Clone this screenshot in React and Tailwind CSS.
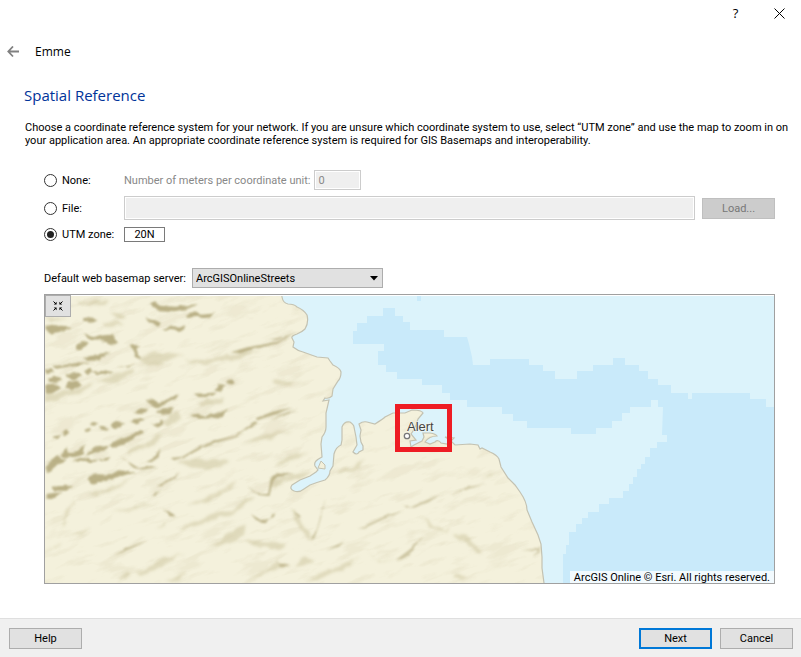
import React from "react";

const DEEP_WATER =
  "M353 344V331H357V323H367V316H383V308H395V316H403V322H410V330H444V337H467L469 344L472 357L473 365H490V359H529V365H543V371H555V379H577V371H593V365H613V358H625V365H639V371H648V379H658V385H671V393H688V399H692V393H750V399H766V407H1600V900H563V554H566V545H569V532H576V524H582V518H588V512H599V504H609V498H623V491H629V484H633V477H637V469H641V464H645V457H650V448H657V442H667V435H662L663 407H658V400H651V407H630V413H622V421H612V428H596V434H571V428H527V421H513V414H502V407H467V400H450V393H442V385H422V379H397V372H386V365H378V351H384V344Z";

const LAND =
  "M30 280H280L282 297Q283 303 288 304Q294 304 297 307Q304 310 307 315Q309 322 305 329Q302 332 297 334Q291 336 292 338L294 342L293 347Q298 351 303 352L317 357L328 358L330 361L333 365Q340 368 341 372Q341 378 338 381L333 389L332 396Q329 399 325 398L323 401L329 400L326 413V427Q326 432 322 437L321 444L322 457Q318 459 316 461Q314 463 315 466L318 470L316 472L310 476L300 480L292 485Q289 489 294 491Q299 493 304 489L310 485Q318 482 325 480Q330 476 330 471L333 466L334 454Q336 447 341 445L342 440V427Q344 421 350 422Q354 425 354 427L356 437L357 445L353 452Q357 456 359 452L363 450L363 446L361 442L360 436L361 430L359 424Q363 421 367 422L375 424Q383 419 385 417L393 413L405 413L412 410Q422 410 423 413L418 419L416 425L413 431L411 434L416 440L410 441L411 447L414 445L422 441L424 437L423 433L430 433Q436 434 437 436Q429 436 425 442L430 444L435 442Q438 439 441 443L447 444L450 440L445 437L454 438L451 441L455 445L470 444L478 445L480 449L482 448L490 452Q497 455 499 459L501 467L508 478L515 485L520 492Q527 502 527 510L532 522L538 535L541 544L542 557L542 568L544 583L544 620H30Z";

/* Shaded slopes, in map units of one third of a pixel */
const DARK_SLOPES = [
  "M315 28L335 22L350 35L395 38L460 30L435 43L390 52L335 48Z",
  "M425 62L450 52L475 62L512 58L492 75L460 68L430 72Z",
  "M305 72L330 80L352 90L342 98L315 85Z",
  "M350 105L385 97L425 98L415 112L375 108Z",
  "M5 96L25 92L55 98L85 101L50 113L20 119L5 110Z",
  "M118 75L150 70L160 80L140 86L118 83Z",
  "M118 122L155 126L205 122L224 150L200 151L165 137L128 135Z",
  "M100 150L116 140L135 150L112 164L98 168Z",
  "M118 190L155 184L205 178L168 196L135 197Z",
  "M20 216L55 214L100 207L148 204L108 216L70 218L38 224Z",
  "M5 225L20 223L30 235L10 240Z",
  "M10 250L30 248L55 258L40 266L12 262Z",
  "M65 240L100 236L112 248L88 256L68 249Z",
  "M120 228L140 221L148 236L130 240Z",
  "M70 264L105 260L112 275L82 290L64 279Z",
  "M5 275L28 268L52 282L25 298L5 300Z",
  "M145 237L182 227L212 232L172 243Z",
  "M220 218L245 218L275 207L250 222Z",
  "M255 148L288 158L280 164L292 198L278 190L268 168Z",
  "M308 318L326 316L345 329L405 296L396 314L365 330L340 343L320 332Z",
  "M265 352L292 343L314 346L294 360L274 359Z",
  "M335 350L355 343L390 343L375 360L355 362Z",
  "M322 388L345 388L350 373L362 390L346 400Z",
  "M448 299L485 298L518 297L505 305L460 306Z",
  "M510 288L525 267L545 276L525 293Z",
  "M545 265L562 252L575 268L560 272Z",
  "M438 363L455 360L475 366L515 360L552 345L538 365L510 373L460 374Z",
  "M200 392L210 383L242 388L230 400L210 402Z",
  "M250 384L285 376L310 376L280 388Z",
  "M138 390L150 382L160 388L148 400Z",
  "M165 400L185 394L194 405L175 409Z",
  "M55 415L70 407L76 418L58 424Z",
  "M25 428L50 424L46 434L32 434Z",
  "M118 404L138 399L140 407L122 411Z",
  "M195 455L215 440L250 430L292 408L300 415L270 435L240 448L205 462Z",
  "M130 475L155 460L198 455L180 470L150 474L120 488Z",
  "M50 483L65 462L78 475L105 470L122 450L116 478L95 488L62 492Z",
  "M80 502L120 492L160 498L200 488L188 499L140 505Z",
  "M5 515L40 486L65 497L42 510L15 535L5 540Z",
  "M130 555L148 540L190 542L225 529L280 534L225 548L175 561L140 570Z",
  "M20 578L60 575L92 577L66 590L30 590Z",
  "M5 600L55 594L30 608L5 618Z",
];

const LINE_SLOPES = [
  "M230 490L260 508L285 523L320 516L338 520L295 527L270 522Z",
  "M310 503L335 488L350 460L344 490L322 505Z",
  "M380 492L415 488L460 462L520 438L575 425L610 398L632 382L642 386L605 408L578 428L530 442L470 464L430 486L390 499Z",
  "M635 373L690 352L748 340L690 362L640 379Z",
  "M560 175L610 160L700 143L745 122L700 149L640 163L590 178Z",
  "M340 577L382 552L408 537L390 553L352 577Z",
  "M322 604L350 590L335 605Z",
  "M360 645L382 660L397 668L376 667Z",
  "M210 785L250 762L312 738L270 758L230 777Z",
  "M610 577L650 600L672 600L682 550L700 535L748 540L705 545L688 560L676 606L645 603Z",
  "M620 660L640 672L650 678L678 674L695 652L690 668L660 685L640 682Z",
  "M700 810L740 812L715 818Z",
  "M678 138L740 122L760 118L700 137Z",
];

const EAST_LINE_SLOPES = [
  "M1075 630L1100 640L1130 626L1185 602L1155 624L1110 641L1085 640Z",
  "M940 706L985 685L1035 662L1078 652L1030 670L970 698Z",
  "M1215 604L1270 579L1328 570L1280 583Z",
  "M1055 798L1100 764L1138 725L1110 768L1075 796Z",
  "M845 770L900 742L885 758Z",
  "M678 380L720 358L762 342L720 366Z",
  "M740 645L770 665L765 672Z",
  "M800 740L820 700L845 612L835 660L812 733Z",
  "M1430 768L1480 765L1490 755L1485 772Z",
  "M1465 790L1490 768L1485 780Z",
];

const SOFT_SLOPES = [
  "M100 15L140 25L200 14L185 32L145 36L118 26Z",
  "M200 56L230 55L243 68L220 74Z",
  "M5 70L40 68L65 74L20 79Z",
  "M170 94L210 82L240 92L205 98Z",
  "M290 195L330 175L420 185L370 205L305 213Z",
  "M420 200L520 190L650 165L590 192L480 210Z",
  "M150 270L200 246L265 225L272 235L220 262Z",
  "M5 300L100 285L150 265L110 300L5 325Z",
  "M250 470L300 450L355 420L345 445L295 463L240 482Z",
  "M350 380L400 350L415 375L370 395Z",
  "M400 505L440 495L560 500L510 520L440 524Z",
  "M590 450L650 425L745 410L680 432L610 445Z",
  "M465 325L540 310L530 328L470 334Z",
  "M130 605L185 585L255 558L225 580L160 603Z",
  "M200 655L280 636L350 628L260 649Z",
  "M340 700L378 680L355 698Z",
  "M430 640L510 600L580 560L560 580L490 625Z",
  "M410 700L490 665L570 645L600 618L640 600L590 645L510 680L420 705Z",
  "M500 755L550 720L605 690L600 725L560 748Z",
  "M600 740L730 750L705 765L630 755Z",
  "M615 855L690 815L700 790L705 818L650 845Z",
  "M5 770L55 745L35 763Z",
  "M275 840L340 800L420 780L360 810L310 836Z",
  "M55 710L62 650L95 610L70 655Z",
  "M85 715L145 705L110 721Z",
  "M220 860L250 832L260 848Z",
  "M360 865L430 835L410 860Z",
  "M685 262L750 265L730 275L690 270Z",
  "M690 515L745 485L800 470L750 498Z",
  "M740 645L765 665L800 740L785 735L755 680Z",
  "M678 550L735 545L800 535L775 553L720 560L690 585Z",
  "M678 740L720 760L698 770Z",
  "M678 812L725 808L745 818L700 826Z",
  "M750 820L780 790L815 800L775 815Z",
  "M1125 660L1170 695L1206 715L1230 675L1210 718L1165 705Z",
  "M965 770L1000 795L1060 798L1005 802Z",
  "M1225 725L1260 720L1320 770L1300 775L1260 745Z",
  "M780 865L840 830L950 790L890 825L820 858Z",
  "M1230 840L1280 850L1260 860L1235 855Z",
  "M880 530L930 520L960 490L945 525L890 538Z",
  "M1310 555L1350 540L1340 552Z",
];

function Slopes({ paths }) {
  return (
    <g transform="translate(44 294) scale(0.33333)">
      {paths.map((d) => (
        <path key={d} d={d} />
      ))}
    </g>
  );
}

function BasemapView() {
  return (
    <svg
      className="block h-full w-full"
      viewBox="45 296 729 287"
      preserveAspectRatio="xMidYMid slice"
      role="img"
      aria-label="Map of the area around Alert"
    >
      <defs>
        <clipPath id="land-clip">
          <path d={LAND} />
        </clipPath>
        <filter id="ragged" x="-5%" y="-5%" width="110%" height="110%">
          <feTurbulence type="fractalNoise" baseFrequency="0.12" numOctaves="2" seed="3" result="noise" />
          <feDisplacementMap in="SourceGraphic" in2="noise" scale="5" xChannelSelector="R" yChannelSelector="G" />
          <feGaussianBlur stdDeviation="0.9" />
        </filter>
        <filter id="thin" x="-5%" y="-5%" width="110%" height="110%">
          <feTurbulence type="fractalNoise" baseFrequency="0.1" numOctaves="2" seed="5" result="noise" />
          <feDisplacementMap in="SourceGraphic" in2="noise" scale="3" xChannelSelector="R" yChannelSelector="G" />
          <feGaussianBlur stdDeviation="0.8" />
        </filter>
        <filter id="soft" x="-5%" y="-5%" width="110%" height="110%">
          <feTurbulence type="fractalNoise" baseFrequency="0.08" numOctaves="3" seed="9" result="noise" />
          <feDisplacementMap in="SourceGraphic" in2="noise" scale="7" xChannelSelector="R" yChannelSelector="G" />
          <feGaussianBlur stdDeviation="1.5" />
        </filter>
        <filter id="grain" x="0" y="0" width="100%" height="100%">
          <feTurbulence type="fractalNoise" baseFrequency="0.03 0.1" numOctaves="4" seed="7" />
          <feColorMatrix values="0 0 0 0 0.7  0 0 0 0 0.65  0 0 0 0 0.46  5 0 0 0 -2.6" />
        </filter>
      </defs>
      <rect x="-400" y="0" width="2000" height="1000" fill="#dcf3fb" />
      <path d={DEEP_WATER} fill="#c9eafa" />
      <path d={LAND} fill="#f4f1dc" stroke="#c3c2b2" strokeWidth="1.2" />
      <g clipPath="url(#land-clip)">
        <g transform="rotate(-20 300 440)" opacity="0.26">
          <rect x="-60" y="180" width="720" height="560" filter="url(#grain)" />
        </g>
        <g fill="#cbc39b" opacity="0.5" filter="url(#soft)">
          <Slopes paths={SOFT_SLOPES} />
        </g>
        <g fill="#b0a678" opacity="0.85" filter="url(#ragged)">
          <Slopes paths={DARK_SLOPES} />
        </g>
        <g fill="#b5ab7f" opacity="0.85" filter="url(#thin)">
          <Slopes paths={LINE_SLOPES} />
        </g>
        <g fill="#b5ab7f" opacity="0.6" filter="url(#thin)">
          <Slopes paths={EAST_LINE_SLOPES} />
        </g>
      </g>
      <path d="M318 468L321 461L325 465L325 469Z" fill="#f3f0da" stroke="#c3c2b2" />
      <path d="M417 296H421V301H417Z" fill="#c9eafa" />
      <circle cx="407" cy="436" r="2.7" fill="#fff" stroke="#777" strokeWidth="1.3" />
      <text
        x="407"
        y="431"
        className="font-['Liberation_Sans',Arial,sans-serif] text-[13px]"
        fill="#444"
        stroke="#f6f6ee"
        strokeWidth="1"
        paintOrder="stroke"
      >
        Alert
      </text>
      <rect x="397.5" y="406.5" width="52" height="43" fill="none" stroke="#ee1c24" strokeWidth="5" />
    </svg>
  );
}

function CrsOption({ id, label, defaultChecked, children }) {
  return (
    <div className="flex items-center">
      <div className="flex w-20 shrink-0 items-center gap-[5px]">
        <input
          type="radio"
          id={id}
          name="crs"
          defaultChecked={defaultChecked}
          className="grid size-[13px] appearance-none place-items-center rounded-full border border-[#333] bg-white before:size-[7px] before:rounded-full checked:before:bg-[#222]"
        />
        <label htmlFor={id} className="whitespace-nowrap">
          {label}
        </label>
      </div>
      {children}
    </div>
  );
}

const button = "h-[21px] w-[73px] shrink-0 border text-center leading-[19px]";
const disabledField =
  "border border-[#ccc] bg-[#efefef] px-[3px] text-[#888] shadow-[inset_0_0_0_1px_#fff]";

export default function App() {
  return (
    <div className="flex min-h-screen flex-col bg-white font-['Roboto',Tahoma,sans-serif] text-[11px] leading-[13px] text-black">
      <header className="font-['Open_Sans','Segoe_UI',sans-serif]">
        <div className="flex h-[26px] justify-end">
          <button aria-label="Help" className="w-[45px] text-[13px]">
            ?
          </button>
          <button aria-label="Close" className="grid w-[43px] place-items-center">
            <svg width="11" height="11" viewBox="0 0 11 11" stroke="#000">
              <path d="M.5 .5L10.5 10.5M10.5 .5L.5 10.5" />
            </svg>
          </button>
        </div>
        <div className="mt-4 flex h-5 items-center gap-4 pl-[7px]">
          <button aria-label="Back">
            <svg width="12" height="12" viewBox="0 0 12 12" fill="none" stroke="#808080" strokeWidth="1.8">
              <path d="M12 5.5H1.5M6 .5L1.3 5.5L6 10.5" />
            </svg>
          </button>
          <span className="text-[12px] leading-5">Emme</span>
        </div>
        <h1 className="mt-[23px] pl-6 text-[15px] leading-5 text-[#003399]">Spatial Reference</h1>
      </header>

      <main className="flex flex-1 flex-col">
        <p className="mt-4 pr-3 pl-[25px]">
          Choose a coordinate reference system for your network. If you are unsure which coordinate system to
          use, select “UTM zone” and use the map to zoom in on your application area. An appropriate coordinate
          reference system is required for GIS Basemaps and interoperability.
        </p>

        <div className="mt-[23px] flex flex-col pr-[26px] pl-11">
          <CrsOption id="crs-none" label="None:">
            <label htmlFor="unit" className="mr-1 text-[#888]">
              Number of meters per coordinate unit:
            </label>
            <input id="unit" disabled defaultValue="0" className={`h-5 w-[47px] ${disabledField}`} />
          </CrsOption>
          <div className="mt-[6px]">
            <CrsOption id="crs-file" label="File:">
              <input aria-label="File path" disabled className={`h-6 min-w-0 flex-1 ${disabledField}`} />
              <button disabled className={`ml-[7px] border-[#bfbfbf] bg-[#ccc] text-[#777] ${button}`}>
                Load...
              </button>
            </CrsOption>
          </div>
          <div className="mt-[7px]">
            <CrsOption id="crs-utm" label="UTM zone:" defaultChecked>
              <button className="h-[15px] w-[41px] border border-[#7a7a7a] bg-white leading-[13px]">20N</button>
            </CrsOption>
          </div>

          <div className="mt-[26px] flex items-center gap-[6px]">
            <label htmlFor="basemap">Default web basemap server:</label>
            <div className="relative">
              <select
                id="basemap"
                className="block h-5 w-[191px] appearance-none border border-[#adadad] bg-[#e1e1e1] px-[3px]"
              >
                <option>ArcGISOnlineStreets</option>
              </select>
              <svg className="pointer-events-none absolute top-2 right-[5px]" width="8" height="5" viewBox="0 0 8 5">
                <path d="M0 0H8L4 4.5Z" />
              </svg>
            </div>
          </div>

          <div className="relative mt-[6px] h-[290px] border border-[#a0a0a0] pt-px">
            <BasemapView />
            <button
              aria-label="Zoom to full extent"
              className="absolute top-0 left-0 grid h-[22px] w-[26px] place-items-center border border-[#adadad] bg-[#e1e1e1]"
            >
              <svg width="10" height="10" viewBox="0 0 10 10" fill="#000" stroke="#000">
                <path d="M.5 .5L3 3M9.5 .5L7 3M.5 9.5L3 7M9.5 9.5L7 7" />
                <path stroke="none" d="M3.6 .8V3.6H.8ZM6.4 .8V3.6H9.2ZM3.6 9.2V6.4H.8ZM6.4 9.2V6.4H9.2Z" />
              </svg>
            </button>
            <span className="absolute right-0 bottom-0 h-3 bg-white/75 px-1 leading-[13px]">
              ArcGIS Online © Esri. All rights reserved.
            </span>
          </div>
        </div>
      </main>

      <footer className="flex h-[39px] items-center gap-2 border-t border-[#dfdfdf] bg-[#f0f0f0] pr-2 pl-[9px]">
        <button className={`mr-auto border-[#adadad] bg-[#e1e1e1] ${button}`}>Help</button>
        <button className={`border-[#0078d7] bg-[#e1e1e1] shadow-[inset_0_0_0_1px_#0078d7] ${button}`}>Next</button>
        <button className={`border-[#adadad] bg-[#e1e1e1] ${button}`}>Cancel</button>
      </footer>
    </div>
  );
}
